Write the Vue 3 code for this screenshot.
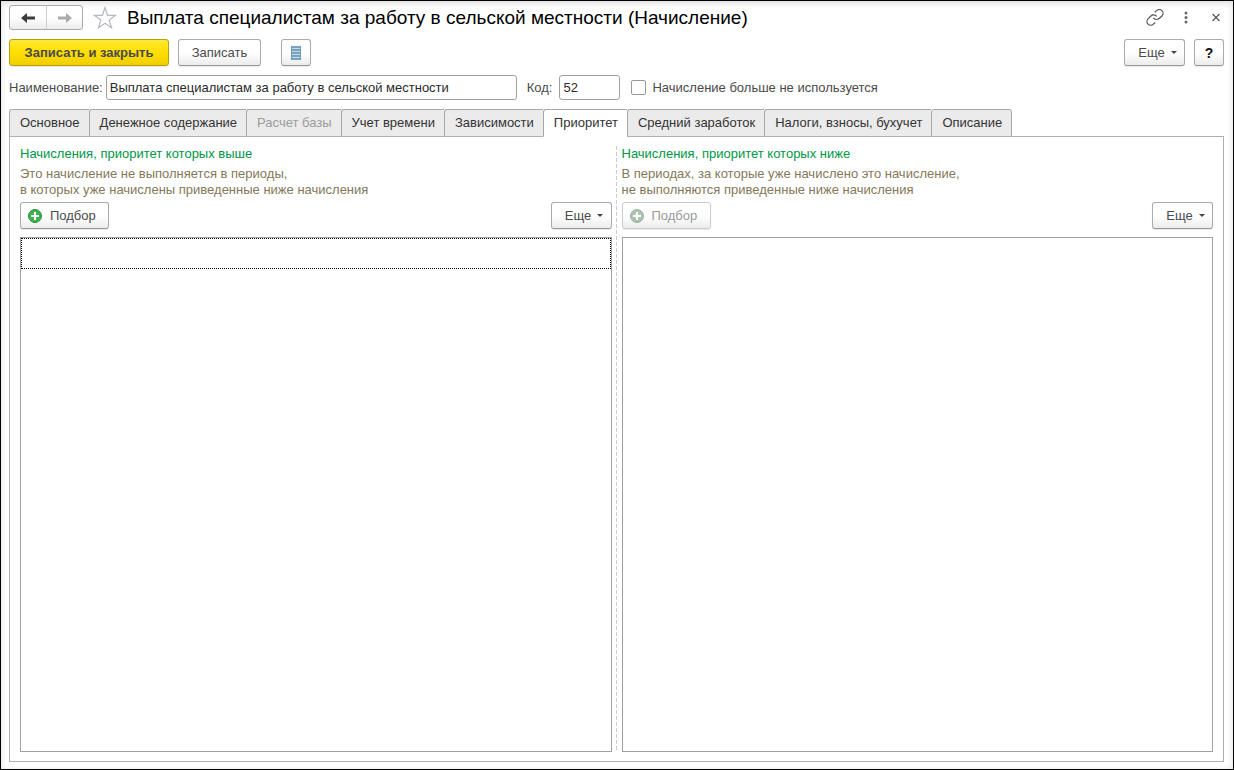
<script setup>
import { ref } from 'vue'

const name = ref('Выплата специалистам за работу в сельской местности')
const code = ref('52')
const unused = ref(false)
const activeTab = ref('Приоритет')

const tabs = [
  { title: 'Основное' },
  { title: 'Денежное содержание' },
  { title: 'Расчет базы', disabled: true },
  { title: 'Учет времени' },
  { title: 'Зависимости' },
  { title: 'Приоритет' },
  { title: 'Средний заработок' },
  { title: 'Налоги, взносы, бухучет' },
  { title: 'Описание' },
]

const columns = [
  {
    id: 'higher',
    title: 'Начисления, приоритет которых выше',
    hint: ['Это начисление не выполняется в периоды,', 'в которых уже начислены приведенные ниже начисления'],
    disabled: false,
    rows: [''],
  },
  {
    id: 'lower',
    title: 'Начисления, приоритет которых ниже',
    hint: ['В периодах, за которые уже начислено это начисление,', 'не выполняются приведенные ниже начисления'],
    disabled: true,
    rows: [],
  },
]
</script>

<template>
  <main class="window">
    <header class="title-bar">
      <div class="history">
        <button type="button" aria-label="Назад">
          <svg width="16" height="12" viewBox="0 0 16 12"><path d="M1 6l6-5v3.600h8v2.800H7V11z" fill="#3c3c3c" /></svg>
        </button>
        <button type="button" aria-label="Вперед">
          <svg width="16" height="12" viewBox="0 0 16 12"><path d="M15 6L9 1v3.600H1v2.800h8V11z" fill="#ababab" /></svg>
        </button>
      </div>
      <button type="button" class="plain star" aria-label="В избранное">
        <svg width="24" height="24" viewBox="0 0 24 24"><path d="M12 1.500l2.600 7.800H22.500l-6.300 4.800 2.300 7.600L12 17.200l-6.500 4.500 2.300-7.600L1.500 9.300h7.900z" fill="#fff" stroke="#b4b8bf" stroke-width="1.200" /></svg>
      </button>
      <h1>Выплата специалистам за работу в сельской местности (Начисление)</h1>
      <div class="window-tools">
        <button type="button" class="plain" aria-label="Получить ссылку">
          <svg width="18" height="18" viewBox="1 2 22 22"><path d="M10 13a5 5 0 0 0 7 .5l3.500-3a4.500 4.500 0 0 0-6.500-6.500l-2.200 2M14 11a5 5 0 0 0-7-.5l-3.500 3.500a4.500 4.500 0 0 0 6.500 6.500l2.200-2" fill="none" stroke="#555" stroke-width="1.500" /></svg>
        </button>
        <button type="button" class="plain" aria-label="Меню">
          <svg width="18" height="18" viewBox="0 0 18 18"><g fill="#666"><circle cx="10" cy="4" r="1.500" /><circle cx="10" cy="8.500" r="1.500" /><circle cx="10" cy="13" r="1.500" /></g></svg>
        </button>
        <button type="button" class="plain" aria-label="Закрыть">
          <svg width="18" height="18" viewBox="0 0 18 18"><path d="M6.500 5l7 7M13.500 5l-7 7" stroke="#555" stroke-width="1.200" /></svg>
        </button>
      </div>
    </header>

    <div class="commands">
      <button type="button" class="btn primary">Записать и закрыть</button>
      <button type="button" class="btn save">Записать</button>
      <button type="button" class="btn icon-btn list-btn" aria-label="Список">
        <svg width="12" height="14" viewBox="0 0 12 14"><path d="M1 0h10v14H1z" fill="#c3d9e8" /><path d="M1 1h10M1 4h10M1 7h10M1 10h10M1 13h10" stroke="#6390b0" stroke-width="1.300" /><path d="M1.500 0v14M10.500 0v14" stroke="#6f98b5" /></svg>
      </button>
      <button type="button" class="btn more push">Еще<span class="caret"></span></button>
      <button type="button" class="btn icon-btn help" aria-label="Справка">?</button>
    </div>

    <form class="fields" @submit.prevent>
      <label for="name">Наименование:</label>
      <input id="name" v-model="name" type="text" class="text name-input">
      <label for="code" class="code-label">Код:</label>
      <input id="code" v-model="code" type="text" class="text code-input">
      <input id="unused" v-model="unused" type="checkbox" class="check">
      <label for="unused">Начисление больше не используется</label>
    </form>

    <nav class="tabs" role="tablist">
      <button
        v-for="tab in tabs"
        :key="tab.title"
        type="button"
        role="tab"
        class="tab"
        :class="{ active: tab.title === activeTab }"
        :aria-selected="tab.title === activeTab"
        :disabled="tab.disabled"
        @click="activeTab = tab.title"
      >{{ tab.title }}</button>
    </nav>

    <section class="panel" role="tabpanel">
      <template v-for="(column, index) in columns" :key="column.id">
        <div v-if="index" class="splitter"></div>
        <section class="column">
          <h2>{{ column.title }}</h2>
          <p><span v-for="line in column.hint" :key="line">{{ line }}</span></p>
          <div class="column-tools">
            <button type="button" class="btn pick" :disabled="column.disabled">
              <svg width="14" height="14" viewBox="0 0 14 14"><circle cx="7" cy="7" r="6.500" fill="#3fb24f" stroke="#2b8f3c" /><path d="M7 3v8M3 7h8" stroke="#fff" stroke-width="2" /></svg>
              Подбор
            </button>
            <button type="button" class="btn more">Еще<span class="caret"></span></button>
          </div>
          <div class="list" role="listbox" :aria-label="column.title">
            <div v-for="(row, i) in column.rows" :key="i" class="row" role="option">{{ row }}</div>
          </div>
        </section>
      </template>
    </section>
  </main>
</template>

<style>
body {
  margin: 0;
}
</style>

<style scoped>
* {
  box-sizing: border-box;
}

.window {
  display: flex;
  flex-direction: column;
  min-height: 100vh;
  padding: 4px 9px 7px 8px;
  border: 1px solid #000;
  background: #fff;
  box-shadow: inset 0 2px 6px #dedade;
  color: #4a4a4a;
  font: 13px/16px "Liberation Sans", Arial, sans-serif;
}

button,
input {
  margin: 0;
  font: inherit;
  color: inherit;
}

button {
  padding: 0;
}

svg {
  display: block;
}

.title-bar {
  display: flex;
  align-items: center;
  height: 25px;
}

.history {
  display: flex;
  height: 25px;
  border: 1px solid #a8a8a8;
  border-radius: 3px;
  background: linear-gradient(#fff 50%, #ececec);
}

.history button {
  display: flex;
  align-items: center;
  justify-content: center;
  width: 36px;
  border: 0;
  background: none;
}

.history button + button {
  border-left: 1px solid #d0d0d0;
}

.plain {
  display: flex;
  align-items: center;
  justify-content: center;
  border: 0;
  background: none;
}

.star {
  margin: 0 10px;
}

h1 {
  flex: 1;
  margin: 0;
  color: #000;
  font-size: 19px;
  font-weight: 400;
  line-height: 24px;
  white-space: nowrap;
}

.window-tools {
  display: flex;
  gap: 12px;
}

.commands {
  display: flex;
  margin-top: 9px;
}

.btn {
  display: flex;
  align-items: center;
  justify-content: center;
  height: 27px;
  border: 1px solid #ababab;
  border-bottom-color: #979797;
  border-radius: 3px;
  background: linear-gradient(#fff 50%, #ececec);
  box-shadow: 0 1px 1px #e8e8e8;
  white-space: nowrap;
}

.primary {
  width: 160px;
  border-color: #b89f10;
  background: linear-gradient(#ffe932, #ffde00 50%, #f0cf00);
  font-weight: 700;
}

.save {
  width: 83px;
  margin-left: 9px;
}

.icon-btn {
  width: 30px;
}

.list-btn {
  margin-left: 20px;
}

.more {
  width: 61px;
  padding-left: 6px;
  gap: 6px;
}

.caret {
  border: 3px solid transparent;
  border-top-color: #444;
  border-bottom: 0;
}

.push {
  margin-left: auto;
}

.help {
  margin-left: 9px;
  color: #111;
  font-size: 14px;
  font-weight: 700;
}

.fields {
  display: flex;
  align-items: center;
  margin-top: 9px;
}

.text {
  height: 25px;
  padding: 0 3px;
  border: 1px solid #a0a0a0;
  border-radius: 3px;
  background: #fff;
  color: #2a2a2a;
}

.fields label {
  white-space: nowrap;
}

.name-input {
  width: 411px;
  margin-left: 3px;
}

.code-label {
  margin-left: 10px;
}

.code-input {
  width: 61px;
  margin-left: 7px;
}

.check {
  appearance: none;
  width: 15px;
  height: 15px;
  margin: 0 6px 0 11px;
  border: 1px solid #999;
  border-radius: 2px;
  background: #fff;
}

.tabs {
  display: flex;
  margin-top: 9px;
}

.tab {
  height: 28px;
  margin-bottom: -1px;
  padding: 0 9px 0 10px;
  border: 1px solid #a8a8a8;
  border-right-width: 0;
  border-radius: 3px 0 0 0;
  background: #ebebeb;
  color: #333;
  white-space: nowrap;
}

.tab:last-child {
  border-right-width: 1px;
  border-radius: 3px 3px 0 0;
}

.tab.active {
  position: relative;
  border-bottom-color: #fff;
  background: #fff;
}

.tab:disabled {
  color: #9c9c9c;
}

.panel {
  display: grid;
  flex: 1;
  grid-template-columns: 1fr auto 1fr;
  padding: 9px 10px;
  border: 1px solid #b0b0b0;
}

.splitter {
  width: 1px;
  margin: 0 5px 0 4px;
  background: repeating-linear-gradient(#ccc 0 4px, #fff 4px 6px);
}

.column {
  display: flex;
  flex-direction: column;
  min-width: 0;
}

h2 {
  margin: 0;
  color: #009646;
  font-size: 13px;
  font-weight: 400;
  line-height: 16px;
}

p {
  margin: 4px 0;
  color: #83795a;
}

p span {
  display: block;
}

.column-tools {
  display: flex;
  justify-content: space-between;
}

.pick {
  justify-content: flex-start;
  width: 89px;
  padding-left: 7px;
  gap: 8px;
}

.pick:disabled {
  border-color: #ccc;
  color: #999;
}

.pick:disabled svg {
  filter: grayscale(70%);
  opacity: 0.6;
}

.list {
  flex: 1;
  margin-top: 8px;
  border: 1px solid #a0a0a0;
}

.row {
  height: 31px;
  border: 1px dotted #000;
}
</style>
